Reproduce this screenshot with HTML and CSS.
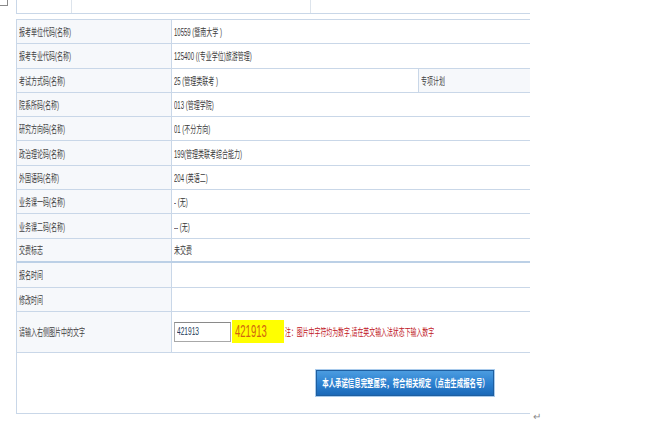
FILE: index.html
```html
<!DOCTYPE html>
<html lang="zh-CN">
<head>
<meta charset="utf-8">
<title>报名信息确认</title>
<link rel="stylesheet" href="styles.css">
</head>
<body>
<div class="corner"></div>
<div class="page">
  <div class="sheet">
    <div class="head">
      <div class="hcell h1"></div>
      <div class="hcell h2"></div>
      <div class="hcell h3"></div>
    </div>
    <div class="grid">
      <div class="row"><div class="lab"><span class="sq">报考单位代码(名称)</span></div><div class="val"><span class="sq">10559 (暨南大学 )</span></div></div>
      <div class="row"><div class="lab"><span class="sq">报考专业代码(名称)</span></div><div class="val"><span class="sq">125400 ((专业学位)旅游管理)</span></div></div>
      <div class="row"><div class="lab"><span class="sq">考试方式码(名称)</span></div><div class="val mid"><span class="sq">25 (管理类联考 )</span></div><div class="lab extra"><span class="sq">专项计划</span></div></div>
      <div class="row"><div class="lab"><span class="sq">院系所码(名称)</span></div><div class="val"><span class="sq">013 (管理学院)</span></div></div>
      <div class="row"><div class="lab"><span class="sq">研究方向码(名称)</span></div><div class="val"><span class="sq">01 (不分方向)</span></div></div>
      <div class="row"><div class="lab"><span class="sq">政治理论码(名称)</span></div><div class="val"><span class="sq">199(管理类联考综合能力)</span></div></div>
      <div class="row"><div class="lab"><span class="sq">外国语码(名称)</span></div><div class="val"><span class="sq">204 (英语二)</span></div></div>
      <div class="row"><div class="lab"><span class="sq">业务课一码(名称)</span></div><div class="val"><span class="sq">- (无)</span></div></div>
      <div class="row"><div class="lab"><span class="sq">业务课二码(名称)</span></div><div class="val"><span class="sq">-- (无)</span></div></div>
      <div class="row thick"><div class="lab"><span class="sq">交费标志</span></div><div class="val"><span class="sq">未交费</span></div></div>
      <div class="row r25"><div class="lab"><span class="sq">报名时间</span></div><div class="val"></div></div>
      <div class="row r24"><div class="lab"><span class="sq">修改时间</span></div><div class="val"></div></div>
      <div class="row captcha"><div class="lab"><span class="sq">请输入右侧图片中的文字</span></div>
        <div class="val cval">
          <div class="inp"><span class="sq">421913</span></div>
          <div class="code"><span class="codetext">421913</span></div>
          <span class="sq note">注：图片中字符均为数字,请在英文输入法状态下输入数字</span>
        </div>
      </div>
      <div class="row btnrow">
        <div class="btn"><span class="btntext">本人承诺信息完整属实，符合相关规定（点击生成报名号）</span></div>
      </div>
    </div>
  </div>
  <span class="ret">↵</span>
</div>
</body>
</html>
```

FILE: styles.css
```css
* { box-sizing: border-box; }
html, body { margin: 0; padding: 0; background: #ffffff; }
body {
  font-family: "Liberation Sans", "Noto Sans CJK SC", sans-serif;
  font-size: 10px;
  color: #404040;
  position: relative;
  width: 665px;
  height: 422px;
  overflow: hidden;
}
.corner {
  position: absolute;
  left: 0;
  top: 0;
  width: 8px;
  height: 6px;
  border-right: 1px solid #8a8a8a;
  border-bottom: 1px solid #8a8a8a;
}
.page {
  display: flex;
  align-items: flex-end;
  padding-left: 16px;
}
.sheet { width: 514px; flex: none; }
.head {
  display: flex;
  height: 14px;
  border-left: 1px solid #c9d7e8;
  border-bottom: 1px solid #c9d7e8;
  margin-bottom: 5px;
}
.hcell { height: 100%; }
.h1 { width: 55px; border-right: 1px solid #dde4ec; }
.h2 { width: 239px; border-right: 1px solid #dde4ec; }
.h3 { flex: 1; }
.grid {
  border-top: 1px solid #c9d7e8;
  border-left: 1px solid #c9d7e8;
  display: flex;
  flex-direction: column;
}
.row {
  display: flex;
  height: 24.3px;
  border-bottom: 1px solid #c9d7e8;
}
.row.thick { border-bottom: 2px solid #bcd0e6; }
.row.r25 { height: 25px; }
.row.r24 { height: 24px; }
.row.captcha { height: 41px; }
.lab {
  flex: none;
  width: 155px;
  background: #f6f8fb;
  border-right: 1px solid #c9d7e8;
  display: flex;
  align-items: center;
  padding-left: 2px;
  overflow: visible;
  white-space: nowrap;
}
.val {
  flex: 1;
  min-width: 0;
  display: flex;
  align-items: center;
  padding-left: 2px;
  white-space: nowrap;
  color: #383838;
}
.val.mid { flex: none; width: 247px; border-right: 1px solid #c9d7e8; }
.lab.extra { flex: 1; width: auto; border-right: none; padding-left: 2px; }
.sq {
  display: inline-block;
  transform: scaleX(0.6);
  transform-origin: left center;
  white-space: nowrap;
  flex: none;
}
.cval { padding-left: 2px; }
.inp {
  width: 57px;
  height: 20px;
  border: 1px solid #a8a8a8;
  border-top-color: #8a8a8a;
  background: #fff;
  display: flex;
  align-items: center;
  padding-left: 2px;
  color: #243a5a;
  flex: none;
}
.inp .sq { transform: scaleX(0.66); }
.code {
  width: 52px;
  height: 23px;
  background: #ffff00;
  margin-left: 1px;
  display: flex;
  align-items: center;
  padding-left: 3px;
  flex: none;
  overflow: visible;
}
.codetext {
  display: inline-block;
  font-size: 17px;
  color: #d0660e;
  transform: scaleX(0.56);
  transform-origin: left center;
  white-space: nowrap;
}
.note {
  color: #c0141c;
  margin-left: 1px;
  transform: scaleX(0.59);
}
.btnrow {
  height: 61px;
  align-items: center;
  padding-left: 299px;
}
.btn {
  flex: none;
  width: 178px;
  height: 26px;
  border: 1px solid #1e5e9f;
  box-shadow: 0 0 0 1px #a9cbec;
  background: linear-gradient(#4b9ce0, #2a7fcf 55%, #1b69b8);
  display: flex;
  align-items: center;
  justify-content: center;
  overflow: visible;
}
.btntext {
  display: inline-block;
  color: #ffffff;
  font-weight: bold;
  font-size: 10.5px;
  white-space: nowrap;
  transform: scaleX(0.61);
  transform-origin: center center;
  flex: none;
}
.ret {
  color: #8a8a8a;
  font-size: 10px;
  margin-left: 3px;
  margin-bottom: -8px;
  line-height: 1;
}
```
